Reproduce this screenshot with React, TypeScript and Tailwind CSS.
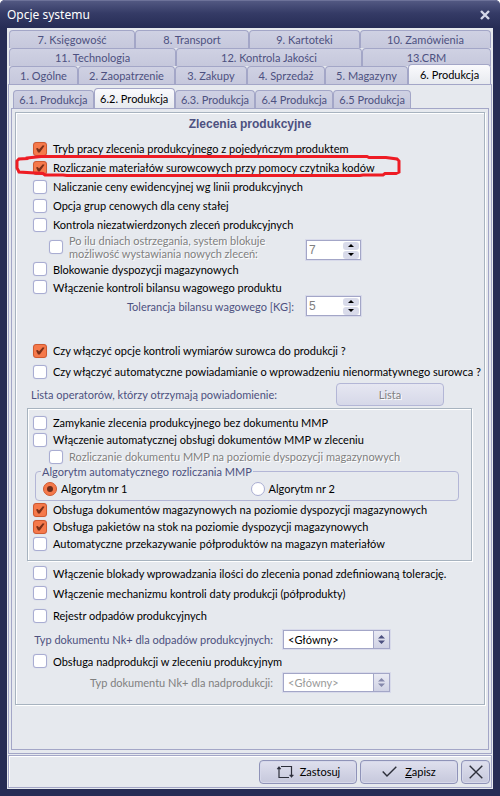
import { useState } from 'react';
import type { ReactNode } from 'react';
import { clsx } from 'clsx';

const topRows = [
  {
    cols: 'grid-cols-[126fr_114fr_111fr_131fr]',
    tabs: ['7. Księgowość', '8. Transport', '9. Kartoteki', '10. Zamówienia'],
  },
  {
    cols: 'grid-cols-[167fr_186fr_129fr]',
    tabs: ['11. Technologia', '12. Kontrola Jakości', '13.CRM'],
  },
  {
    cols: 'grid-cols-[69fr_97fr_72fr_78fr_83fr_83fr]',
    tabs: ['1. Ogólne', '2. Zaopatrzenie', '3. Zakupy', '4. Sprzedaż', '5. Magazyny', '6. Produkcja'],
  },
];

const subTabs = ['6.1. Produkcja', '6.2. Produkcja', '6.3. Produkcja', '6.4 Produkcja', '6.5 Produkcja'];

function Tab({ label, active, onClick }: { label: string; active: boolean; onClick: () => void }) {
  return (
    <button
      type="button"
      role="tab"
      aria-selected={active}
      onClick={onClick}
      className={clsx(
        'flex items-center justify-center whitespace-nowrap rounded-t-[4px] border border-b-0 border-[#a3a6c7] text-[11px] leading-4',
        active
          ? '-mt-0.5 -mb-px h-[21px] bg-linear-to-b from-[#fafafd] to-[#e6e9ee] text-black'
          : 'h-[18px] bg-linear-to-b from-[#cfd1e3] to-[#c6c8dc] text-[#4d5180]'
      )}
    >
      {label}
    </button>
  );
}

interface CheckProps {
  label: ReactNode;
  checked?: boolean;
  disabled?: boolean;
  className?: string;
  children?: ReactNode;
}

function Check({ label, checked, disabled, className, children }: CheckProps) {
  return (
    <label className={clsx('relative flex items-center gap-1.5 whitespace-nowrap', className)}>
      <span className="relative size-3.5 shrink-0">
        <input
          type="checkbox"
          defaultChecked={checked}
          disabled={disabled}
          className="peer block size-3.5 appearance-none rounded-[3px] border border-[#a9add2] bg-white shadow-[0_0_1px_#b9bcdc] checked:border-[#cf5a30] checked:bg-[#f5794b]"
        />
        <svg
          viewBox="0 0 14 14"
          className="pointer-events-none absolute inset-0 hidden size-3.5 peer-checked:block"
        >
          <path d="M3 6.6 L4.8 6 L6 7.6 L9.8 3.2 L11.6 3.8 L6.8 10.6 L5 10.6 Z" fill="#7a2f18" />
        </svg>
      </span>
      <span className={clsx(disabled && 'text-[#808080] [text-shadow:1px_1px_0_#fff]')}>{label}</span>
      {children}
    </label>
  );
}

function Spinner({ id, value }: { id: string; value: number }) {
  const [count, setCount] = useState(value);
  return (
    <span className="flex h-5 w-[55px] items-center border border-[#a3a6c7] bg-white pr-px shadow-[0_0_0_1px_#d8daea]">
      <input
        id={id}
        type="text"
        inputMode="numeric"
        aria-label={id === 'dni' ? 'Liczba dni' : undefined}
        value={count}
        onChange={(e) => setCount(Number(e.target.value) || 0)}
        className="w-full min-w-0 bg-transparent pl-0.5 font-['Liberation_Sans',sans-serif] text-[12px] text-[#808080] outline-none"
      />
      <span className="flex shrink-0 flex-col gap-px">
        <button
          type="button"
          aria-label="Więcej"
          onClick={() => setCount(count + 1)}
          className="flex h-2 w-4 items-center justify-center rounded-[3px] bg-[#d9dbea]"
        >
          <svg viewBox="0 0 6 3" className="h-[3px] w-1.5"><path d="M3 0 L6 3 H0 Z" /></svg>
        </button>
        <button
          type="button"
          aria-label="Mniej"
          onClick={() => setCount(count - 1)}
          className="flex h-2 w-4 items-center justify-center rounded-[3px] bg-[#d9dbea]"
        >
          <svg viewBox="0 0 6 3" className="h-[3px] w-1.5"><path d="M0 0 H6 L3 3 Z" /></svg>
        </button>
      </span>
    </span>
  );
}

function DocSelect({ id, label, disabled }: { id: string; label: string; disabled?: boolean }) {
  return (
    <div className="flex h-[23px] items-center gap-2.5">
      <label
        htmlFor={id}
        className={clsx('w-60 text-right whitespace-nowrap', disabled ? 'text-[#808080]' : 'text-[#4d5180]')}
      >
        {label}
      </label>
      <span className="relative h-[19px] w-[107px]">
        <select
          id={id}
          disabled={disabled}
          className={clsx(
            'block size-full appearance-none border border-[#a3a6c7] bg-white pl-1 shadow-[0_0_0_1px_#d8daea] disabled:opacity-100',
            disabled ? 'text-[#9a9a9a]' : 'text-black'
          )}
        >
          <option>&lt;Główny&gt;</option>
        </select>
        <span className="pointer-events-none absolute inset-y-px right-px flex w-4 items-center justify-center border-l border-[#a3a6c7] bg-linear-to-b from-[#e9eaf3] to-[#d0d2e4]">
          <svg
            viewBox="0 0 7 9"
            className={clsx('h-[9px] w-[7px]', disabled ? 'fill-[#8588ab]' : 'fill-[#4d5180]')}
          >
            <path d="M3.5 0 L7 3.5 H0 Z M0 5.5 H7 L3.5 9 Z" />
          </svg>
        </span>
      </span>
    </div>
  );
}

function Radio({ label, checked }: { label: string; checked?: boolean }) {
  return (
    <label className="flex items-center gap-1">
      <span className="relative size-3.5">
        <input
          type="radio"
          name="algorytm"
          defaultChecked={checked}
          className="peer block size-3.5 appearance-none rounded-full border border-[#a9add2] bg-white checked:border-[#cf5a30] checked:bg-[#f5794b]"
        />
        <span className="pointer-events-none absolute inset-1 hidden rounded-full bg-[#6b2c1a] peer-checked:block" />
      </span>
      {label}
    </label>
  );
}

const footerButton =
  'flex h-6 items-center justify-center rounded-[4px] border border-[#8f93b8] bg-linear-to-b from-[#dfe0ee] to-[#c6c8dc] text-[11px] text-black shadow-[inset_0_0_0_1px_#d6d8ea]';

export default function App() {
  const [tab, setTab] = useState('6. Produkcja');
  const [subTab, setSubTab] = useState('6.2. Produkcja');

  return (
    <div className="flex min-h-screen flex-col rounded-t-[5px] bg-[#262c55] px-[7px] pb-[7px] font-['Lato','Liberation_Sans',sans-serif] text-[11px] leading-[13px] text-black">
      {/* Title bar */}
      <header className="-mx-[7px] flex h-7 items-center justify-between rounded-t-[5px] border-t border-[#6d7299] bg-linear-to-b from-[#525882] via-[#353b66] via-45% to-[#262c55] pr-2.5 pl-[7px]">
        <h1 className="font-['Noto_Sans',sans-serif] text-[12px] text-white">Opcje systemu</h1>
        <button type="button" aria-label="Zamknij okno">
          <svg viewBox="0 0 10 10" className="size-2.5" stroke="#d5d8ea" strokeWidth="2.4">
            <path d="M1 1 L9 9 M9 1 L1 9" />
          </svg>
        </button>
      </header>

      <div className="flex flex-1 flex-col bg-[#e6e9ee] px-px pt-0.5 pb-px">
        {/* Main tabs */}
        <div role="tablist" className="px-px">
          {topRows.map((row) => (
            <div key={row.cols} className={clsx('grid', row.cols)}>
              {row.tabs.map((t) => (
                <Tab key={t} label={t} active={t === tab} onClick={() => setTab(t)} />
              ))}
            </div>
          ))}
        </div>

        <div className="flex flex-1 flex-col border border-[#a3a6c7] px-0.5 pt-[5px] pb-[3px]">
          <div role="tablist" className="grid w-[400px] grid-cols-[81fr_81fr_81fr_78fr_78fr] pl-0.5">
            {subTabs.map((t) => (
              <Tab key={t} label={t} active={t === subTab} onClick={() => setSubTab(t)} />
            ))}
          </div>

          <div className="flex-1 border border-[#a3a6c7] p-[3px]">
            <section className="border border-[#a7b3bf] pb-2.5 shadow-[inset_1px_1px_0_#fff,1px_1px_0_#fff]">
              <h2 className="mt-px mb-[5px] text-center font-['Liberation_Sans',sans-serif] text-[12px] leading-5 font-bold text-[#4d5180]">
                Zlecenia produkcyjne
              </h2>

              <div className="pl-[17px]">
                <Check className="h-[19px]" checked label="Tryb pracy zlecenia produkcyjnego z pojedyńczym produktem" />
                <Check
                  className="h-[19px]"
                  checked
                  label="Rozliczanie materiałów surowcowych przy pomocy czytnika kodów"
                >
                  <svg
                    viewBox="0 0 386 22"
                    className="pointer-events-none absolute top-[-3px] left-[-18px] h-[22px] w-[386px]"
                    fill="none"
                    stroke="#ee1c24"
                    strokeWidth="3"
                  >
                    <path d="M12 3 L26 1.5 H352 L354 2.5 H371 L382 4 L384 6 V17 L381 18.5 H370 L368 20 H348 L345 20.5 H52 L48 20 H30 L28 18.5 L4 17 L2 13 V6 L4 4 L12 3.5 Z" />
                  </svg>
                </Check>
                <Check className="h-[19px]" label="Naliczanie ceny ewidencyjnej wg linii produkcyjnych" />
                <Check className="h-[19px]" label="Opcja grup cenowych dla ceny stałej" />
                <Check className="h-[19px]" label="Kontrola niezatwierdzonych zleceń produkcyjnych" />
                <div className="flex h-[26px] items-end pl-4">
                  <Check
                    className="w-[257px]"
                    disabled
                    label={
                      <>
                        Po ilu dniach ostrzegania, system blokuje
                        <br />
                        możliwość wystawiania nowych zleceń:
                      </>
                    }
                  />
                  <Spinner id="dni" value={7} />
                </div>
                <Check className="h-[18px]" label="Blokowanie dyspozycji magazynowych" />
                <Check className="h-[18px]" label="Włączenie kontroli bilansu wagowego produktu" />
                <div className="flex h-5 items-center gap-3">
                  <label htmlFor="tolerancja" className="w-[261px] text-right text-[#4d5180]">
                    Tolerancja bilansu wagowego [KG]:
                  </label>
                  <Spinner id="tolerancja" value={5} />
                </div>

                <Check className="mt-6 h-[21px]" checked label="Czy włączyć opcje kontroli wymiarów surowca do produkcji ?" />
                <Check
                  className="h-[21px]"
                  label="Czy włączyć automatyczne powiadamianie o wprowadzeniu nienormatywnego surowca ?"
                />
              </div>

              <div className="flex h-6 items-center pl-[15px] text-[#4d5180]">
                <span className="w-[305px]">Lista operatorów, którzy otrzymają powiadomienie:</span>
                <button
                  type="button"
                  disabled
                  className="h-[23px] w-[108px] rounded-[4px] border border-[#b3b6d6] bg-linear-to-b from-[#e6e7f2] to-[#d6d8e8] text-[11px] text-[#808080] [text-shadow:1px_1px_0_#fff]"
                >
                  Lista
                </button>
              </div>

              {/* MMP documents */}
              <div className="mt-0.5 mr-3 ml-[11px] border border-[#a7b3bf] pt-[5px] pb-2 pl-[5px] shadow-[inset_1px_1px_0_#fff,1px_1px_0_#fff]">
                <Check className="h-[17px]" label="Zamykanie zlecenia produkcyjnego bez dokumentu MMP" />
                <Check className="h-[17px]" label="Włączenie automatycznej obsługi dokumentów MMP w zleceniu" />
                <Check
                  className="ml-4 h-[17px]"
                  disabled
                  label="Rozliczanie dokumentu MMP na poziomie dyspozycji magazynowych"
                />
                <fieldset className="mr-3 ml-0.5 h-9 rounded-[4px] border border-[#b3b6d6] pl-[7px]">
                  <legend className="-ml-0.5 px-px text-[#4d5180]">Algorytm automatycznego rozliczania MMP</legend>
                  <div className="grid h-[21px] grid-cols-2 items-center">
                    <Radio label="Algorytm nr 1" checked />
                    <Radio label="Algorytm nr 2" />
                  </div>
                </fieldset>
                <Check
                  className="h-[17px]"
                  checked
                  label="Obsługa dokumentów magazynowych na poziomie dyspozycji magazynowych"
                />
                <Check className="h-[17px]" checked label="Obsługa pakietów na stok na poziomie dyspozycji magazynowych" />
                <Check className="h-[17px]" label="Automatyczne przekazywanie półproduktów na magazyn materiałów" />
              </div>

              <div className="mt-0.5 pl-[17px]">
                <Check
                  className="h-5"
                  label="Włączenie blokady wprowadzania ilości do zlecenia ponad zdefiniowaną tolerację."
                />
                <Check className="h-5" label="Włączenie mechanizmu kontroli daty produkcji (półprodukty)" />
                <Check className="h-[25px]" label="Rejestr odpadów produkcyjnych" />
                <DocSelect id="typ-odpady" label="Typ dokumentu Nk+ dla odpadów produkcyjnych:" />
                <Check className="h-5" label="Obsługa nadprodukcji w zleceniu produkcyjnym" />
                <DocSelect id="typ-nadprodukcja" label="Typ dokumentu Nk+ dla nadprodukcji:" disabled />
              </div>
            </section>
          </div>
        </div>

        {/* Actions */}
        <footer className="mt-px flex h-[33px] items-center justify-end gap-[3px] border border-[#a3a6c7] pr-px shadow-[inset_1px_1px_0_#fff]">
          <button type="button" className={clsx(footerButton, 'w-[98px] gap-1.5')}>
            <svg viewBox="0 0 18 14" className="h-3.5 w-[18px]" fill="none" stroke="#2d2f3a" strokeWidth="1.2">
              <path d="M3 2 V12.5 H13 M5 1.5 H15.5 V11" />
              <path d="M1 4 L3 1.5 L5 4 Z M13.5 10 L15.5 12.5 L17.5 10 Z" fill="#2d2f3a" strokeWidth="0.5" />
            </svg>
            Zastosuj
          </button>
          <button type="button" className={clsx(footerButton, 'w-[98px] gap-2')}>
            <svg viewBox="0 0 15 11" className="h-[11px] w-[15px]" fill="none" stroke="#2d2f3a" strokeWidth="1.4">
              <path d="M0.7 5.5 L5 10 L14.3 0.7" />
            </svg>
            <span>
              <span className="underline">Z</span>apisz
            </span>
          </button>
          <button type="button" aria-label="Zamknij" className={clsx(footerButton, 'w-[29px]')}>
            <svg viewBox="0 0 14 14" className="size-3.5" fill="none" stroke="#2d2f3a" strokeWidth="1.4">
              <path d="M0.7 0.7 L13.3 13.3 M13.3 0.7 L0.7 13.3" />
            </svg>
          </button>
        </footer>
      </div>
    </div>
  );
}
